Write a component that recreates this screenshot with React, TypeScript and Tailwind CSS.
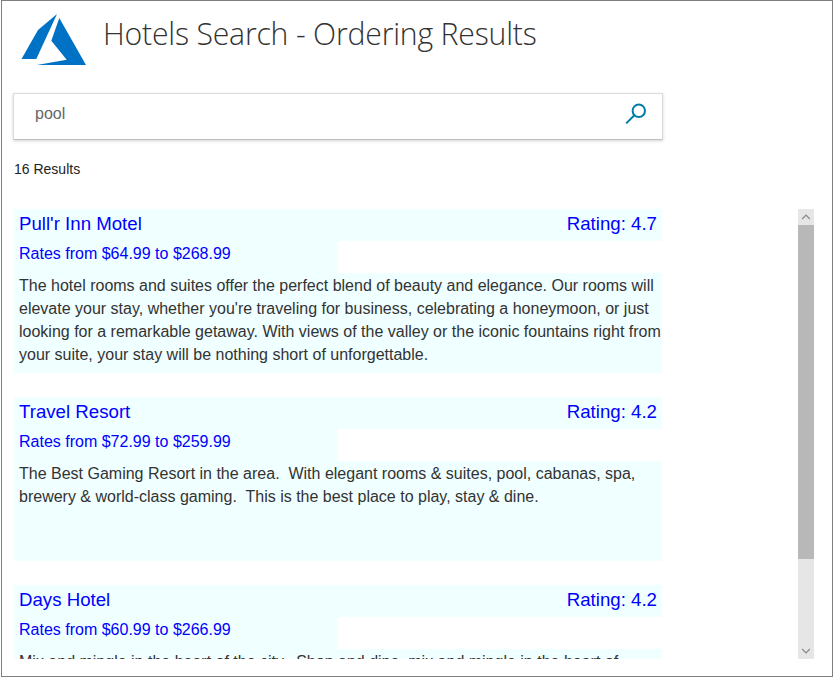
type Hotel = { name: string; rating: string; low: string; high: string; lines: string[] };

const hotels: Hotel[] = [
  {
    name: "Pull'r Inn Motel",
    rating: "4.7",
    low: "64.99",
    high: "268.99",
    lines: [
      "The hotel rooms and suites offer the perfect blend of beauty and elegance. Our rooms will",
      "elevate your stay, whether you're traveling for business, celebrating a honeymoon, or just",
      "looking for a remarkable getaway. With views of the valley or the iconic fountains right from",
      "your suite, your stay will be nothing short of unforgettable.",
    ],
  },
  {
    name: "Travel Resort",
    rating: "4.2",
    low: "72.99",
    high: "259.99",
    lines: [
      "The Best Gaming Resort in the area.  With elegant rooms & suites, pool, cabanas, spa,",
      "brewery & world-class gaming.  This is the best place to play, stay & dine.",
    ],
  },
  {
    name: "Days Hotel",
    rating: "4.2",
    low: "60.99",
    high: "266.99",
    lines: ["Mix and mingle in the heart of the city.  Shop and dine, mix and mingle in the heart of"],
  },
];

function Logo() {
  return (
    <svg width="66" height="52" viewBox="0 0 66 52" fill="#0072c6" className="shrink-0">
      <path d="M36 0 L17 16 L0.5 45 H15.3 Z" />
      <path d="M38.3 4 L30.3 26.7 L45.7 45.7 L15.8 51 H65 Z" />
    </svg>
  );
}

function HotelCard({ hotel }: { hotel: Hotel }) {
  return (
    <article className="h-[164px] w-[648px] shrink-0">
      <div className="flex h-8 justify-between bg-[#f0ffff] px-[5px] text-[18.67px] leading-[29px] text-[#0000ff]">
        <h2>{hotel.name}</h2>
        <span>Rating: {hotel.rating}</span>
      </div>
      <div className="h-8 w-[324px] bg-[#f0ffff] pl-[5px] text-base leading-[25px] text-[#0000ff]">
        Rates from ${hotel.low} to ${hotel.high}
      </div>
      <div className="h-[100px] bg-[#f0ffff] pt-px pl-[5px] text-base leading-[23px] text-[#333333]">
        {hotel.lines.map((line) => (
          <p key={line} className="whitespace-pre">{line}</p>
        ))}
      </div>
    </article>
  );
}

function ScrollBar() {
  return (
    <div className="flex h-[450px] w-4 flex-col bg-[#e6e6e6]">
      <svg width="16" height="16" viewBox="0 0 16 16" fill="none" stroke="#868686" strokeWidth="1.2">
        <path d="M4.2 10 L8 6.2 L11.8 10" />
      </svg>
      <div className="h-[334px] bg-[#b8b8b8]" />
      <svg width="16" height="16" viewBox="0 0 16 16" fill="none" stroke="#868686" strokeWidth="1.2" className="mt-auto">
        <path d="M4.2 6 L8 9.8 L11.8 6" />
      </svg>
    </div>
  );
}

export default function App() {
  return (
    <div className="h-[679px] w-[836px] overflow-hidden bg-white pl-px font-['Liberation_Sans',Arial,sans-serif]">
      <main className="h-[677px] w-[832px] border border-[#7f7f7f] pl-3">
        <header className="flex h-[92px] items-start pt-[13px] pl-[7px]">
          <Logo />
          <h1 className="ml-4 origin-left scale-x-[0.943] font-['Open_Sans',sans-serif] text-[32px] leading-[37px] font-light tracking-[-0.2px] whitespace-nowrap text-[#333333]">
            Hotels Search - Ordering Results
          </h1>
        </header>
        <div className="-ml-px flex h-[47px] w-[650px] justify-between border border-[#dcdcdc] border-b-[#c0c0c0] pt-2 pr-[15px] pl-[21px] shadow-[0_1px_3px_rgba(0,0,0,0.18)]">
          <span className="text-base leading-6 text-[#666666]">pool</span>
          <svg width="22" height="22" viewBox="0 0 22 22" fill="none" stroke="#007daa" strokeWidth="2" className="mt-px">
            <circle cx="13.8" cy="7.8" r="6.2" />
            <path d="M9.4 12.2 L1.2 20.4" />
          </svg>
        </div>
        <p className="mt-[19px] h-[50px] text-sm leading-5 text-[#222222]">16 Results</p>
        <div className="flex h-[450px] w-[800px] justify-between">
          <section className="flex flex-col gap-6 overflow-hidden">
            {hotels.map((hotel) => (
              <HotelCard key={hotel.name} hotel={hotel} />
            ))}
          </section>
          <ScrollBar />
        </div>
      </main>
    </div>
  );
}
